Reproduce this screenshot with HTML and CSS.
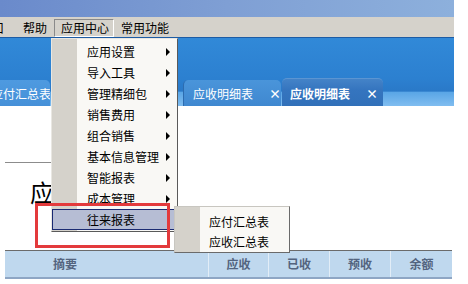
FILE: index.html
```html
<!DOCTYPE html>
<html lang="zh-CN">
<head>
<meta charset="utf-8">
<title>应用中心</title>
<link rel="stylesheet" href="styles.css">
</head>
<body>
<div class="app">
  <div class="titlebar"></div>
  <div class="menubar">
    <span class="mb-item mb-cut">窗口</span>
    <span class="mb-item">帮助</span>
    <span class="mb-item mb-open">应用中心</span>
    <span class="mb-item">常用功能</span>
  </div>
  <div class="tabbar">
    <div class="tab tab-cut">应付汇总表</div>
    <div class="tab tab-normal"><span>应收明细表</span><span class="x">×</span></div>
    <div class="tab tab-active"><span>应收明细表</span><span class="x">×</span></div>
  </div>
  <div class="content">
    <div class="rule"></div>
    <div class="page-title">应</div>
    <div class="grid-head">
      <div class="col col-memo">摘要</div>
      <div class="col">应收</div>
      <div class="col">已收</div>
      <div class="col">预收</div>
      <div class="col">余额</div>
    </div>
  </div>

  <div class="menu main-menu">
    <div class="mi"><span>应用设置</span><i class="arrow"></i></div>
    <div class="mi"><span>导入工具</span><i class="arrow"></i></div>
    <div class="mi"><span>管理精细包</span><i class="arrow"></i></div>
    <div class="mi"><span>销售费用</span><i class="arrow"></i></div>
    <div class="mi"><span>组合销售</span><i class="arrow"></i></div>
    <div class="mi"><span>基本信息管理</span><i class="arrow"></i></div>
    <div class="mi"><span>智能报表</span><i class="arrow"></i></div>
    <div class="mi"><span>成本管理</span><i class="arrow"></i></div>
    <div class="mi mi-sel"><span>往来报表</span></div>
  </div>

  <div class="menu sub-menu">
    <div class="smi">应付汇总表</div>
    <div class="smi">应收汇总表</div>
  </div>

  <div class="highlight-box"></div>
</div>
</body>
</html>
```

FILE: styles.css
```css
* { box-sizing: border-box; }
html, body { margin: 0; padding: 0; background: #ffffff; }
body {
  font-family: "Noto Sans CJK SC", "Noto Sans", sans-serif;
  font-size: 12px;
  color: #000;
  width: 468px;
  height: 284px;
  overflow: hidden;
}
.app { position: relative; width: 454px; height: 284px; }

.titlebar {
  height: 17px;
  background: linear-gradient(to right, #6a8acb, #7f9fd4 50%, #8db0dc);
}

.menubar {
  height: 21px;
  background: #d5d2cb;
  border-bottom: 1px solid #1d5ca4;
  display: flex;
  align-items: flex-start;
  padding-top: 2px;
  overflow: hidden;
}
.mb-item {
  height: 18px;
  line-height: 16px;
  padding: 0 6px;
  white-space: nowrap;
  border: 1px solid transparent;
}
.mb-cut { margin-left: -27px; margin-right: 5px; }
.mb-open {
  border-color: #8a8a8a #ffffff #ffffff #8a8a8a;
  padding: 0 5px 0 6px;
  width: 60px;
}

.tabbar {
  height: 68px;
  background: linear-gradient(#3189d8 0%, #2c80d0 60%, #2a79c8 78%, #5aa6e6 80%, #80bdf0 100%);
  display: flex;
  align-items: flex-end;
  overflow: hidden;
}
.tab {
  height: 26px;
  color: #fff;
  display: flex;
  align-items: center;
  white-space: nowrap;
  border-radius: 5px 5px 0 0;
  padding-top: 1px;
}
.tab-cut {
  width: 68px;
  margin-left: -18px;
  padding-left: 9px;
  overflow: hidden;
  background: linear-gradient(#4e9ae0, #4590d8);
}
.tab-normal {
  margin-left: 133px;
  width: 98px;
  padding-left: 9px;
  background: linear-gradient(#4a95da, #3f88d0);
  border-left: 1px solid #2c6cb0;
}
.tab-active {
  margin-left: 1px;
  width: 101px;
  height: 28px;
  padding-left: 8px;
  font-weight: bold;
  background: linear-gradient(#4483c8, #3575bf 40%, #3170b9);
  border-top: 1px solid #5b95d2;
}
.tab .x { margin-left: 16px; font-weight: bold; font-size: 12px; }
.tab-active .x { margin-left: 16px; }

.content { padding-left: 5px; }
.rule {
  margin-top: 56px;
  width: 46px;
  height: 1px;
  background: #8c8c8c;
}
.page-title {
  margin-top: 15px;
  margin-left: 25px;
  font-size: 24px;
  line-height: 28px;
  height: 28px;
  font-family: "Noto Sans CJK SC", serif;
}
.grid-head {
  margin-top: 44px;
  width: 447px;
  display: grid;
  grid-template-columns: 203px 60px 61px 61px 62px;
  border-top: 1px solid #6b6b6b;
  border-bottom: 2px solid #8ea6c4;
  background: #bfd8ee;
  height: 29px;
}
.col {
  border-left: 1px solid #e2edf7;
  text-align: center;
  line-height: 25px;
  font-weight: bold;
  color: #53647f;
}
.col-memo { border-left: none; text-align: left; padding-left: 48px; }

.menu { position: absolute; }
.main-menu {
  left: 51px;
  top: 38px;
  width: 127px;
  padding: 2px 0 1px;
  background: linear-gradient(to right, #d5d2cb 0, #d5d2cb 25px, #f9f8f5 25px);
  border: 1px solid;
  border-color: #e9e7e2 #5a5a5a #5a5a5a #e9e7e2;
}
.mi {
  height: 21px;
  display: flex;
  align-items: center;
  padding-left: 34px;
  padding-right: 6px;
  border: 1px solid transparent;
}
.mi .arrow {
  margin-left: auto;
  width: 0;
  height: 0;
  border-left: 4px solid #000;
  border-top: 4px solid transparent;
  border-bottom: 4px solid transparent;
}
.mi-sel {
  background: #b6bdd4;
  border-color: #1a2a72;
}

.sub-menu {
  left: 174px;
  top: 206px;
  width: 116px;
  height: 47px;
  padding-top: 5px;
  background: linear-gradient(to right, #d5d2cb 0, #d5d2cb 25px, #f9f8f5 25px);
  border: 1px solid;
  border-color: #c8c6c0 #6a6a6a #6a6a6a #c8c6c0;
}
.smi {
  height: 20px;
  line-height: 20px;
  padding-left: 34px;
  white-space: nowrap;
}

.highlight-box {
  position: absolute;
  left: 35px;
  top: 203px;
  width: 135px;
  height: 45px;
  border: 3px solid #e33a3c;
}
```
